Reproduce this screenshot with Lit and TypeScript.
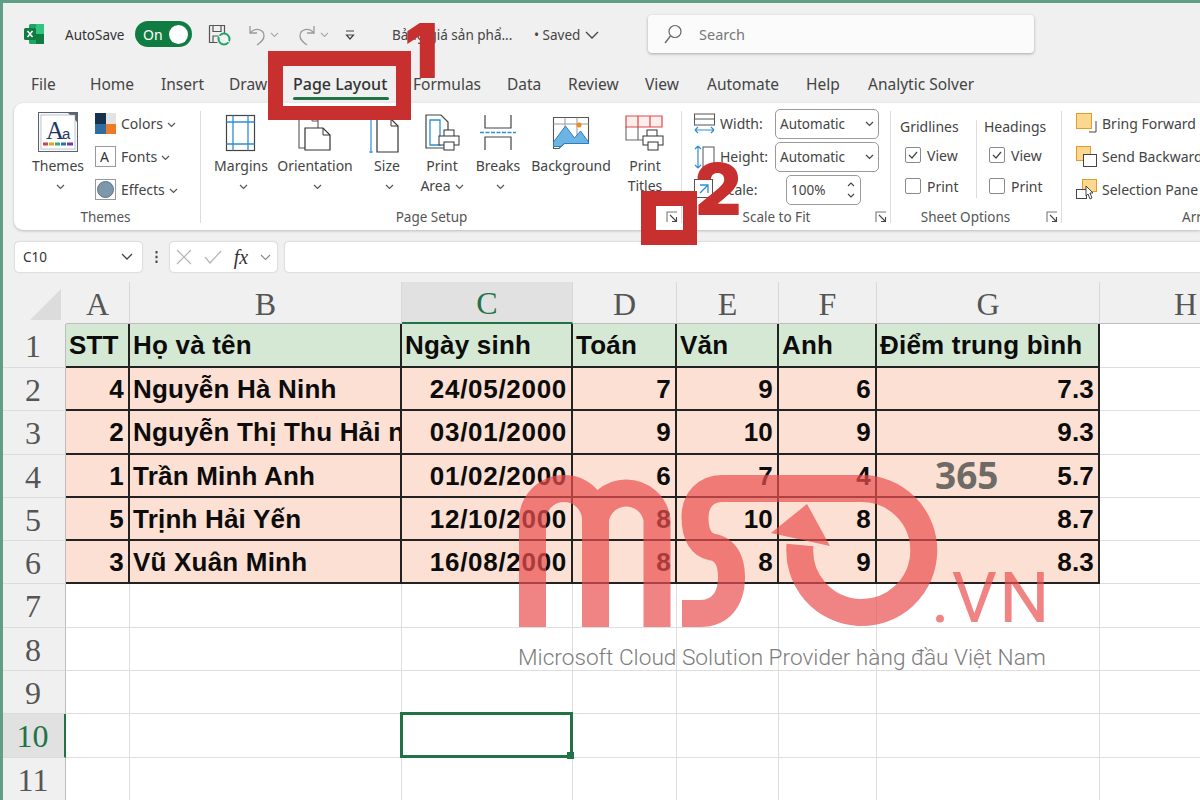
import { LitElement, html, css } from "lit";
import { customElement } from "lit/decorators.js";

const chev = (c = "#555") => html`<svg class="chev" width="9" height="6" viewBox="0 0 9 6"><path d="M1 1l3.5 3.5L8 1" fill="none" stroke=${c} stroke-width="1.2"/></svg>`;
const launcher = html`<svg class="launch" width="12" height="12" viewBox="0 0 12 12"><path d="M1 11V1h10" fill="none" stroke="#777" stroke-width="1.1"/><path d="M4 4l6 6M6 10.500h4.500V6" fill="none" stroke="#444" stroke-width="1.1"/></svg>`;

const bigIcons: Record<string, unknown> = {
  margins: html`<svg width="32" height="38" viewBox="0 0 32 38"><rect x="1.500" y="1.500" width="28" height="35" fill="#fff" stroke="#444" stroke-width="1.200"/><path d="M8 1.500v35M23 1.500v35M1.500 8h28M1.500 30h28" stroke="#2b8fd8" stroke-width="1.300"/></svg>`,
  orientation: html`<svg width="38" height="42" viewBox="0 0 38 42"><path d="M3 3h14l5 5v28H3z" fill="#fff" stroke="#555" stroke-width="1.100"/><path d="M16 3v6h6" fill="none" stroke="#555"/><path d="M9 16h18l7 7v15H9z" fill="#fff" stroke="#333" stroke-width="1.200"/><path d="M27 16v7h7" fill="none" stroke="#333"/></svg>`,
  size: html`<svg class="sizeicon" width="32" height="40" viewBox="0 0 32 40"><path d="M2 6v34M0 6h4M0 39h4" stroke="#2b8fd8" stroke-width="1.200" fill="none"/><path d="M8 6h14l7 7v26H8z" fill="#fff" stroke="#333" stroke-width="1.200"/><path d="M22 6v7h7" fill="none" stroke="#333"/></svg>`,
  area: html`<svg width="36" height="40" viewBox="0 0 36 40"><path d="M2 2h15l7 7v26H2z" fill="#fff" stroke="#444" stroke-width="1.200"/><path d="M6 7h10v25H6z" fill="none" stroke="#2b8fd8" stroke-width="1.300"/><rect x="20" y="17" width="10" height="7" fill="#fff" stroke="#333"/><rect x="15" y="23" width="20" height="9" fill="#fff" stroke="#333"/><rect x="20" y="29" width="10" height="8" fill="#fff" stroke="#333"/></svg>`,
  breaks: html`<svg width="38" height="38" viewBox="0 0 38 38"><path d="M6 1v13h26V1M6 36V23h26v13" fill="none" stroke="#444" stroke-width="1.200"/><path d="M1 18.500h36" stroke="#2b8fd8" stroke-width="1.300" stroke-dasharray="4 1.500"/></svg>`,
  background: html`<svg width="38" height="34" viewBox="0 0 38 34"><path d="M1.500 1.500h35v26H12l-5 5H1.500z" fill="#fff" stroke="#555" stroke-width="1.100"/><path d="M1.500 8h35M13 1.500v10M25 1.500v26" stroke="#999"/><path d="M1.500 26l12-16 9 12 6-7 8 11v1.500H12l-3 3H1.500z" fill="#6cb4e4" stroke="#2b7fc0"/><circle cx="27" cy="9" r="2.500" fill="#ef8a1f"/></svg>`,
  titles: html`<svg width="40" height="36" viewBox="0 0 40 36"><path d="M1 1h36v11H1zM13 1v11M25 1v11" fill="#fdeeee" stroke="#e04848" stroke-width="1.200"/><path d="M1 12v13h18M13 12v13" fill="none" stroke="#666" stroke-width="1.100"/><rect x="22" y="15" width="10" height="7" fill="#fff" stroke="#333"/><rect x="18" y="21" width="20" height="9" fill="#fff" stroke="#333"/><rect x="23" y="27" width="10" height="8" fill="#fff" stroke="#333"/></svg>`,
};

const pageBtns: [string, string, string, string][] = [
  ["margins", "Margins", "", "w62"],
  ["orientation", "Orientation", "", "w86"],
  ["size", "Size", "", "w58"],
  ["area", "Print", "Area", "w52"],
  ["breaks", "Breaks", "", "w60"],
  ["background", "Background", "none", "w86"],
  ["titles", "Print", "Titles", "w62"],
];

const tabs = ["File", "Home", "Insert", "Draw", "Page Layout", "Formulas", "Data", "Review", "View", "Automate", "Help", "Analytic Solver"];
const colHeads = ["A", "B", "C", "D", "E", "F", "G", "H"];
const sheet: string[][] = [
  ["4", "Nguyễn Hà Ninh", "24/05/2000", "7", "9", "6", "7.3"],
  ["2", "Nguyễn Thị Thu Hải n", "03/01/2000", "9", "10", "9", "9.3"],
  ["1", "Trần Minh Anh", "01/02/2000", "6", "7", "4", "5.7"],
  ["5", "Trịnh Hải Yến", "12/10/2000", "8", "10", "8", "8.7"],
  ["3", "Vũ Xuân Minh", "16/08/2000", "8", "8", "9", "8.3"],
];
const titles = ["STT", "Họ và tên", "Ngày sinh", "Toán", "Văn", "Anh", "Điểm trung bình"];

@customElement("app-root")
export class AppRoot extends LitElement {
  static styles = css`
    :host {
      display: block; position: relative; width: 1200px; height: 800px; overflow: hidden;
      box-sizing: border-box; padding: 3px 0 0 3px; background: #f0f0f0;
      box-shadow: inset 3px 3px 0 #5f9f85;
      font-family: "Noto Sans", sans-serif; font-size: 14px; color: #444;
    }
    svg { display: block; flex: none; }
    .chev { display: inline-block; vertical-align: middle; margin-left: 4px; }
    .sizeicon { margin-left: -4px; }

    .title { height: 63px; display: flex; align-items: center; padding: 0 0 0 21px; box-sizing: border-box; padding-top: 1px; }
    .xl { margin-top: -2px; }
    .autosave { margin-left: 21px; width: 70px; color: #333; font-size: 13.500px; }
    .toggle { width: 57px; height: 26px; border-radius: 13px; background: #107c41; box-sizing: border-box; padding: 0 4px 0 8px; display: flex; align-items: center; justify-content: space-between; color: #fff; font-size: 14px; margin-top: -2px; }
    .knob { width: 19px; height: 19px; border-radius: 50%; background: #fff; }
    .qa { display: flex; align-items: center; margin-left: 16px; }
    .ml16 { margin-left: 16px; } .ml18 { margin-left: 18px; } .ml3 { margin-left: 3px; } .ml5 { margin-left: 5px; }
    .docname { margin-left: 37px; width: 142px; font-size: 13.500px; color: #444; white-space: nowrap; }
    .saved { font-size: 13.500px; color: #444; display: flex; align-items: center; width: 114px; white-space: nowrap; }
    .search { width: 386px; height: 38px; box-sizing: border-box; background: #fbfbfb; border-radius: 4px; box-shadow: 0 1px 3px rgba(0,0,0,.3); display: flex; align-items: center; padding-left: 16px; gap: 17px; color: #777; font-size: 14.500px; margin-top: -2px; }

    .tabs { height: 37px; box-sizing: border-box; padding-bottom: 2px; display: grid; grid-template-columns: 59px 71px 68px 64px 120px 94px 61px 77px 62px 99px 62px auto; padding-left: 28px; align-items: center; color: #444; font-size: 15.500px; }
    .tab { white-space: nowrap; }
    .tab.on { color: #333; font-size: 16px; font-weight: 500; }

    .ribbon { margin-left: 11px; height: 127px; background: #fff; border-radius: 9px 0 0 9px; box-shadow: 0 1px 3px rgba(0,0,0,.22); display: flex; }
    .sep { width: 1px; height: 112px; align-self: center; background: #dcdcdc; flex: none; }
    .group { display: flex; flex-direction: column; box-sizing: border-box; flex: none; }
    .gbody { height: 102px; box-sizing: border-box; display: flex; }
    .glabel { height: 23px; display: grid; grid-template-columns: 1fr auto 1fr; align-items: center; font-size: 13.500px; color: #555; padding-right: 3px; white-space: nowrap; }
    .glabel .launch { grid-column: 3; justify-self: end; }
    .glabel span { grid-column: 2; }
    .g-themes { width: 186px; }
    .g-page { width: 480px; }
    .g-page .glabel span { margin-right: 16px; }
    .g-scale { width: 208px; }
    .g-scale .glabel span { margin-right: 16px; }
    .g-sheet { width: 170px; }
    .g-sheet .glabel span { margin-right: 18px; }
    .g-arr { width: 200px; }
    .g-arr .glabel { grid-template-columns: auto 1fr; padding-left: 120px; }
    .g-arr .glabel span { grid-column: 1; }

    .big { display: flex; flex-direction: column; align-items: center; line-height: 20px; font-size: 14px; color: #444; white-space: nowrap; }
    .bigicon { height: 47px; display: flex; align-items: center; justify-content: center; margin-top: 6px; }
    .w62 { width: 62px; } .w86 { width: 86px; } .w58 { width: 58px; } .w52 { width: 52px; } .w60 { width: 60px; }
    .themebtn { width: 60px; margin-left: 14px; }
    .themeicon { margin-top: 9px; }
    .themename { margin-top: 4px; }
    .smallcol { margin-left: 7px; padding-top: 10px; display: flex; flex-direction: column; }
    .srow { height: 33px; flex: none; display: flex; align-items: flex-start; gap: 5px; white-space: nowrap; line-height: 22px; color: #444; }
    .page-body { padding-left: 9px; }

    .scale-grid { display: grid; grid-template-columns: 26px 55px 104px; grid-template-rows: 33px 33px 33px; padding: 4px 0 0 12px; align-items: center; line-height: 20px; }
    .box { height: 30px; box-sizing: border-box; border: 1px solid #9a9a9a; border-radius: 5px; display: flex; align-items: center; justify-content: space-between; padding: 0 4px 0 4px; color: #444; font-size: 13.500px; width: 104px; }
    .spin { width: 75px; margin-left: 11px; }

    .sheetopts { display: flex; padding-top: 12px; }
    .optcol { display: flex; flex-direction: column; color: #444; white-space: nowrap; }
    .optcol.a { width: 85px; padding-left: 9px; box-sizing: border-box; }
    .optcol.b { width: 80px; padding-left: 7px; box-sizing: border-box; }
    .opthead { height: 24px; line-height: 24px; }
    .opt { height: 30px; display: flex; align-items: center; gap: 6px; padding-left: 5px; margin-top: 1px; }
    .chk { width: 16px; height: 16px; box-sizing: border-box; border: 1px solid #8a8a8a; border-radius: 2px; display: flex; align-items: center; justify-content: center; flex: none; }
    .optsep { width: 1px; height: 78px; margin-top: 5px; background: #dcdcdc; flex: none; }

    .arrange { padding: 10px 0 0 14px; display: flex; flex-direction: column; }

    .fbar { height: 30px; margin-top: 12px; margin-left: 12px; display: flex; align-items: stretch; }
    .fbox { background: #fff; border-radius: 4px; box-shadow: 0 0 2px rgba(0,0,0,.28); display: flex; align-items: center; box-sizing: border-box; flex: none; }
    .name { width: 127px; padding: 0 9px 0 8px; justify-content: space-between; font-size: 13.500px; color: #333; }
    .dots { width: 28px; flex: none; display: flex; align-items: center; justify-content: center; }
    .fn { width: 107px; padding: 0 6px 0 6px; justify-content: space-between; }
    .fx { font-family: "Liberation Serif", serif; font-style: italic; font-size: 20px; color: #333; }
    .finput { margin-left: 8px; width: 930px; }

    .sheet { margin-top: 10px; display: grid; width: 1269px; background: #fff;
      grid-template-columns: 63px 64px 272px 171px 104px 102px 98px 223px 172px;
      grid-template-rows: 42px 44px 43px 44px 43px 43px 43px 44px 43px 43px 44px 43px; }
    .corner { background: #f0f0f0; display: flex; align-items: flex-end; justify-content: flex-end; padding: 0 5px 4px 0; box-sizing: border-box; }
    .ch, .rh { background: #f0f0f0; font-family: "Liberation Serif", serif; font-size: 32px; color: #555; display: flex; align-items: center; justify-content: center; box-sizing: border-box; }
    .ch { border-right: 1px solid #d8d8d8; border-bottom: 1px solid #bdbdbd; padding-top: 3px; }
    .rh { border-bottom: 1px solid #dcdcdc; border-right: 1px solid #bdbdbd; padding-top: 2px; padding-right: 2px; }
    .ch.sel { background: #e1e1e1; color: #217346; border-bottom: 2px solid #217346; }
    .rh.sel { background: #e1e1e1; color: #217346; border-right: 2px solid #217346; }
    .cell { box-sizing: border-box; border-right: 1px solid #dedede; border-bottom: 1px solid #dedede; background: #fff; position: relative; }
    .sel-box { position: absolute; inset: -2px -1px -1px -2px; border: 3px solid #217346; z-index: 1; }
    .handle { position: absolute; right: -4px; bottom: -4px; width: 7px; height: 7px; background: #217346; }
    .d { box-sizing: border-box; border-right: 2px solid #222; border-bottom: 2px solid #222; font-family: "Liberation Sans", sans-serif; font-weight: 700; font-size: 26px; letter-spacing: .2px; color: #0c0c0c; display: flex; align-items: center; overflow: hidden; white-space: nowrap; padding: 1px 4px 0 3px; background: #fce0d3; }
    .d.r { justify-content: flex-end; }
    .d.date { letter-spacing: .7px; }
    .d.t { background: #d5e8d3; }

    .wm { position: absolute; left: 0; top: 0; width: 1200px; height: 800px; }
    .wm-vn { font-family: Roboto, sans-serif; font-weight: 400; font-size: 71px; fill: #ea4f4f; }
    .wm-sub { position: absolute; left: 518px; top: 644px; font-family: Roboto, sans-serif; font-weight: 300; font-size: 22.650px; line-height: 28px; color: #6f6f6f; white-space: nowrap; opacity: .9; }
    .wm-365 { position: absolute; left: 935px; top: 451px; font-family: "Open Sans", sans-serif; font-weight: 700; font-size: 37px; line-height: 48px; color: #6e6a66; }

    .mark { position: absolute; border: solid #c8302f; box-sizing: border-box; }
    .m1 { left: 268px; top: 51px; width: 143px; height: 69px; border-width: 15px 15px 14px 15px; }
    .m2 { left: 641px; top: 191px; width: 56px; height: 54px; border-width: 15px 14px 15px 15px; }
    .num { position: absolute; font-family: Inter, sans-serif; font-weight: 900; color: #c8302f; line-height: 1; }
    .n1 { left: 404px; top: 12px; font-size: 76px; }
    .n2 { left: 695px; top: 153px; font-size: 72px; }
    .underline { position: absolute; left: 293px; top: 97px; width: 96px; height: 2.500px; background: #217346; border-radius: 2px; }
  `;

  render() {
    return html`
      <div class="title">
        <svg class="xl" width="20" height="20" viewBox="0 0 20 20"><rect x="5" y="0" width="15" height="20" rx="1.500" fill="#21a366"/><rect x="12" y="0" width="8" height="10" fill="#33c481"/><rect x="12" y="10" width="8" height="10" fill="#107c41"/><rect x="0" y="4" width="12" height="12" rx="1.500" fill="#107c41"/><path d="M3.500 7l5 6M8.500 7l-5 6" stroke="#fff" stroke-width="1.500"/></svg>
        <div class="autosave">AutoSave</div>
        <div class="toggle"><span>On</span><span class="knob"></span></div>
        <div class="qa">
          <svg width="23" height="22" viewBox="0 0 23 22"><path d="M1.500 1.500h15v8M1.500 1.500v17h8M5 1.500v6h8v-6M5 18v-6h5" fill="none" stroke="#555" stroke-width="1.200"/><circle cx="16" cy="15" r="5.500" fill="none" stroke="#21a366" stroke-width="2"/><path d="M11 12l4 3M21 18l-4-3" stroke="#fff" stroke-width="1.500"/></svg>
          <svg class="ml16" width="20" height="22" viewBox="0 0 20 22"><path d="M3 2v7h7" fill="none" stroke="#9a9a9a" stroke-width="1.300"/><path d="M3 9c5-6 14-4 14 3 0 4-3 6-7 9" fill="none" stroke="#9a9a9a" stroke-width="1.300"/></svg>
          <svg class="ml3" width="9" height="6" viewBox="0 0 9 6"><path d="M1 1l3.500 3.500L8 1" fill="none" stroke="#aaa" stroke-width="1.100"/></svg>
          <svg class="ml18" width="20" height="22" viewBox="0 0 20 22"><path d="M17 2v7h-7" fill="none" stroke="#9a9a9a" stroke-width="1.300"/><path d="M17 9C12 3 3 5 3 12c0 4 3 6 7 9" fill="none" stroke="#9a9a9a" stroke-width="1.300"/></svg>
          <svg class="ml3" width="9" height="6" viewBox="0 0 9 6"><path d="M1 1l3.500 3.500L8 1" fill="none" stroke="#aaa" stroke-width="1.100"/></svg>
          <svg class="ml16" width="10" height="10" viewBox="0 0 10 10"><path d="M1 1h8M1.500 5h7l-3.500 4z" fill="none" stroke="#444" stroke-width="1.200"/></svg>
        </div>
        <div class="docname">Bảng giá sản phẩ...</div>
        <div class="saved"><span>• Saved</span><svg class="ml5" width="14" height="8" viewBox="0 0 14 8"><path d="M1 1l6 6 6-6" fill="none" stroke="#444" stroke-width="1.300"/></svg></div>
        <div class="search"><svg width="18" height="20" viewBox="0 0 18 20"><circle cx="11" cy="7.500" r="6" fill="none" stroke="#666" stroke-width="1.200"/><path d="M6.500 12L1 19" stroke="#666" stroke-width="1.300"/></svg><span>Search</span></div>
      </div>

      <div class="tabs">${tabs.map((t) => html`<div class="tab ${t === "Page Layout" ? "on" : ""}">${t}</div>`)}</div>

      <div class="ribbon">
        <div class="group g-themes">
          <div class="gbody">
            <div class="big themebtn">
              <svg class="themeicon" width="40" height="40" viewBox="0 0 40 40"><rect x=".5" y=".5" width="39" height="39" fill="#f6f8fb" stroke="#5a6470"/><path d="M30 1h9v9z" fill="#5a6470"/><rect x="3" y="3" width="34" height="34" fill="#fff" stroke="#9aa4ad" stroke-width=".6"/><text x="8" y="27" font-family="Liberation Serif, serif" font-size="25" fill="#1f3864">A</text><text x="24" y="27" font-family="Liberation Sans, sans-serif" font-size="15" fill="#1f3864">a</text><path d="M5 32h5" stroke="#c44" stroke-width="3"/><path d="M11 32h5" stroke="#e8a020" stroke-width="3"/><path d="M17 32h5" stroke="#3a7" stroke-width="3"/><path d="M23 32h5" stroke="#27a" stroke-width="3"/><path d="M29 32h6" stroke="#73a" stroke-width="3"/></svg>
              <div class="themename">Themes</div><div>${chev()}</div>
            </div>
            <div class="smallcol">
              <div class="srow"><svg width="21" height="21" viewBox="0 0 21 21"><rect width="11" height="11" fill="#16324f"/><rect x="11" width="10" height="11" fill="#e3e3e3"/><rect y="11" width="11" height="10" fill="#2d6d9f"/><rect x="11" y="11" width="10" height="10" fill="#ed7a24"/></svg><span>Colors${chev()}</span></div>
              <div class="srow"><svg width="21" height="21" viewBox="0 0 21 21"><rect x=".5" y=".5" width="20" height="20" fill="#fff" stroke="#999"/><text x="5" y="16" font-family="Noto Sans, sans-serif" font-size="14" fill="#333">A</text></svg><span>Fonts${chev()}</span></div>
              <div class="srow"><svg width="21" height="21" viewBox="0 0 21 21"><rect x=".5" y=".5" width="20" height="20" fill="#fff" stroke="#999"/><circle cx="10.500" cy="10.500" r="8" fill="#7d97ad" stroke="#5d7485"/></svg><span>Effects${chev()}</span></div>
            </div>
          </div>
          <div class="glabel"><span>Themes</span></div>
        </div>
        <div class="sep"></div>
        <div class="group g-page">
          <div class="gbody page-body">
            ${pageBtns.map(([k, a, b, w]) => html`
              <div class="big ${w}">
                <div class="bigicon">${bigIcons[k]}</div>
                <div>${a}</div>
                ${b === "none" ? "" : b ? html`<div>${b}${k === "area" ? chev() : ""}</div>` : html`<div>${chev()}</div>`}
              </div>`)}
          </div>
          <div class="glabel"><span>Page Setup</span>${launcher}</div>
        </div>
        <div class="sep"></div>
        <div class="group g-scale">
          <div class="gbody">
            <div class="scale-grid">
              <svg width="21" height="21" viewBox="0 0 21 21"><rect x=".5" y="1" width="20" height="11" fill="#fff" stroke="#555"/><path d="M.5 6h20" stroke="#555"/><path d="M1 17h19M1 17l3-3M1 17l3 3M20 17l-3-3M20 17l-3 3" fill="none" stroke="#2b8fd8" stroke-width="1.200"/></svg>
              <div>Width:</div>
              <div class="box"><span>Automatic</span>${chev("#444")}</div>
              <svg width="21" height="24" viewBox="0 0 21 24"><rect x="9" y="2" width="11" height="20" fill="#fff" stroke="#555"/><path d="M4 1v22M4 1L1 4M4 1l3 3M4 23l-3-3M4 23l3-3" fill="none" stroke="#2b8fd8" stroke-width="1.200"/></svg>
              <div>Height:</div>
              <div class="box"><span>Automatic</span>${chev("#444")}</div>
              <svg width="21" height="21" viewBox="0 0 21 21"><rect x=".5" y=".5" width="18" height="18" fill="#fff" stroke="#555"/><path d="M6 14l8-8M6 6h8v8" fill="none" stroke="#2b8fd8" stroke-width="1.300"/></svg>
              <div>Scale:</div>
              <div class="box spin"><span>100%</span><svg width="10" height="20" viewBox="0 0 10 20"><path d="M2 6l3-3 3 3M2 14l3 3 3-3" fill="none" stroke="#444" stroke-width="1.100"/></svg></div>
            </div>
          </div>
          <div class="glabel"><span>Scale to Fit</span>${launcher}</div>
        </div>
        <div class="sep"></div>
        <div class="group g-sheet">
          <div class="gbody sheetopts">
            <div class="optcol a">
              <div class="opthead">Gridlines</div>
              <div class="opt"><span class="chk"><svg width="10" height="8" viewBox="0 0 10 8"><path d="M1 4l3 3 5-6" fill="none" stroke="#444" stroke-width="1.200"/></svg></span>View</div>
              <div class="opt"><span class="chk"></span>Print</div>
            </div>
            <div class="optsep"></div>
            <div class="optcol b">
              <div class="opthead">Headings</div>
              <div class="opt"><span class="chk"><svg width="10" height="8" viewBox="0 0 10 8"><path d="M1 4l3 3 5-6" fill="none" stroke="#444" stroke-width="1.200"/></svg></span>View</div>
              <div class="opt"><span class="chk"></span>Print</div>
            </div>
          </div>
          <div class="glabel"><span>Sheet Options</span>${launcher}</div>
        </div>
        <div class="sep"></div>
        <div class="group g-arr">
          <div class="gbody arrange">
            <div class="srow"><svg width="21" height="21" viewBox="0 0 21 21"><path d="M13 19h7V8" fill="none" stroke="#444"/><rect x=".5" y=".5" width="15" height="15" fill="#fcd78f" stroke="#e59a2c"/></svg><span>Bring Forward</span></div>
            <div class="srow"><svg width="21" height="21" viewBox="0 0 21 21"><rect x=".5" y=".5" width="14" height="14" fill="#fcd78f" stroke="#e59a2c"/><rect x="7.500" y="8.500" width="13" height="12" fill="#fff" stroke="#444"/></svg><span>Send Backward</span></div>
            <div class="srow"><svg width="21" height="21" viewBox="0 0 21 21"><rect x="6.500" y=".5" width="14" height="12" fill="#fcd78f" stroke="#e59a2c"/><rect x=".5" y="10.500" width="10" height="9" fill="#fff" stroke="#444"/><path d="M10 7l7 7h-3l2 5-2 1-2-5-2 2z" fill="#fff" stroke="#333" stroke-width=".9"/></svg><span>Selection Pane</span></div>
          </div>
          <div class="glabel"><span>Arrange</span></div>
        </div>
      </div>

      <div class="fbar">
        <div class="fbox name"><span>C10</span><svg width="12" height="8" viewBox="0 0 12 8"><path d="M1 1l5 5 5-5" fill="none" stroke="#444" stroke-width="1.300"/></svg></div>
        <div class="dots"><svg width="3" height="14" viewBox="0 0 3 14"><path d="M1.500 1v2.500M1.500 5.800v2.500M1.500 10.600v2.500" stroke="#444" stroke-width="2"/></svg></div>
        <div class="fbox fn">
          <svg width="16" height="16" viewBox="0 0 16 16"><path d="M1 1l14 14M15 1L1 15" stroke="#b5b5b5" stroke-width="1.200"/></svg>
          <svg width="18" height="14" viewBox="0 0 18 14"><path d="M1 7l5 6L17 1" fill="none" stroke="#b5b5b5" stroke-width="1.200"/></svg>
          <span class="fx">fx</span>
          <svg width="11" height="7" viewBox="0 0 11 7"><path d="M1 1l4.500 4.500L10 1" fill="none" stroke="#888" stroke-width="1.100"/></svg>
        </div>
        <div class="fbox finput"></div>
      </div>

      <div class="sheet">
        <div class="corner"><svg width="31" height="31" viewBox="0 0 31 31"><path d="M31 0v31H0z" fill="#dcdcdc"/></svg></div>
        ${colHeads.map((c) => html`<div class="ch ${c === "C" ? "sel" : ""}">${c}</div>`)}
        <div class="rh">1</div>
        ${titles.map((t) => html`<div class="d t">${t}</div>`)}
        <div class="cell"></div>
        ${sheet.map((row, i) => html`
          <div class="rh">${i + 2}</div>
          ${row.map((v, j) => html`<div class="d ${j === 1 ? "" : "r"} ${j === 2 ? "date" : ""}">${v}</div>`)}
          <div class="cell"></div>`)}
        ${[7, 8, 9, 10, 11].map((n) => html`
          <div class="rh ${n === 10 ? "sel" : ""}">${n}</div>
          ${[0, 1, 2, 3, 4, 5, 6, 7].map((j) => html`<div class="cell">${n === 10 && j === 2 ? html`<div class="sel-box"><div class="handle"></div></div>` : ""}</div>`)}`)}
      </div>

      <svg class="wm" viewBox="0 0 1200 800">
        <g opacity=".7" fill="none" stroke="#ea4f4f" stroke-width="27">
          <path d="M532.500 627V520A31.500 31.500 0 0 1 595.500 520V627M595.500 520A31 31 0 0 1 657 520V627"/>
          <path d="M682 613.500H700C720 613.500 731.500 600 731.500 577C731.500 562 726 549 712 547C702 545 695 536 695 517C695 500 706 488.500 722 488.500H861A62 62 0 1 1 800 545"/>
          <path d="M807 504L771 533L830 546Z" fill="#ea4f4f" stroke="none"/>
          <text class="wm-vn" stroke="none" x="931" y="622" letter-spacing="2">.VN</text>
        </g>
      </svg>
      <div class="wm-sub">Microsoft Cloud Solution Provider hàng đầu Việt Nam</div>
      <div class="wm-365">365</div>
      <div class="underline"></div>
      <div class="mark m1"></div>
      <div class="num n1">1</div>
      <div class="mark m2"></div>
      <div class="num n2">2</div>
    `;
  }
}
